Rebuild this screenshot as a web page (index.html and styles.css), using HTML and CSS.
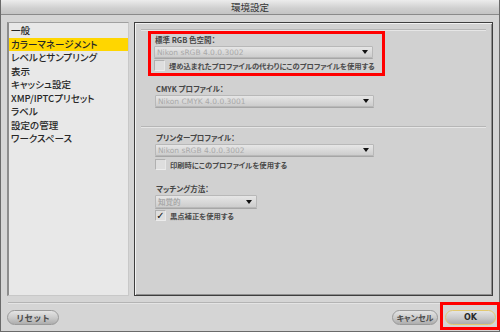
FILE: index.html
```html
<!DOCTYPE html>
<html lang="ja">
<head>
<meta charset="utf-8">
<link rel="stylesheet" href="styles.css">
</head>
<body>
<div class="window">
  <div class="titlebar">環境設定</div>
  <div class="main">
    <ul class="sidebar">
      <li>一般</li>
      <li class="selected">カラーマネージメント</li>
      <li>レベルとサンプリング</li>
      <li>表示</li>
      <li>キャッシュ設定</li>
      <li>XMP/IPTCプリセット</li>
      <li>ラベル</li>
      <li>設定の管理</li>
      <li>ワークスペース</li>
    </ul>
    <div class="content">
      <div class="rule"></div>
      <div class="group marked">
        <div class="label">標準 RGB 色空間：</div>
        <div class="select wide"><span>Nikon sRGB 4.0.0.3002</span><i class="arrow"></i></div>
        <div class="check"><span class="box"></span><span>埋め込まれたプロファイルの代わりにこのプロファイルを使用する</span></div>
      </div>
      <div class="group g2">
        <div class="label">CMYK プロファイル：</div>
        <div class="select wide"><span>Nikon CMYK 4.0.0.3001</span><i class="arrow"></i></div>
      </div>
      <div class="rule r2"></div>
      <div class="group g3">
        <div class="label">プリンタープロファイル：</div>
        <div class="select wide"><span>Nikon sRGB 4.0.0.3002</span><i class="arrow"></i></div>
        <div class="check"><span class="box"></span><span>印刷時にこのプロファイルを使用する</span></div>
      </div>
      <div class="group g4">
        <div class="label">マッチング方法：</div>
        <div class="select narrow"><span>知覚的</span><i class="arrow"></i></div>
        <div class="check"><span class="box checked">✓</span><span>黒点補正を使用する</span></div>
      </div>
    </div>
  </div>
  <div class="separator"></div>
  <div class="footer">
    <button class="btn reset">リセット</button>
    <div class="right">
      <button class="btn cancel">キャンセル</button>
      <button class="btn ok">OK</button>
    </div>
  </div>
</div>
</body>
</html>
```

FILE: styles.css
```css
* { box-sizing: border-box; }
html, body { margin: 0; padding: 0; }
body {
  width: 500px;
  height: 332px;
  overflow: hidden;
  font-family: "Noto Sans CJK JP", "Noto Sans", sans-serif;
  font-feature-settings: "palt";
  background: #d4d4d4;
}
.window {
  width: 500px;
  height: 332px;
  border: 1px solid #6a6a6a;
  border-top: none;
  background: #d5d5d5;
  display: flex;
  flex-direction: column;
}
.titlebar {
  height: 15px;
  background: linear-gradient(#ececec, #cfcfcf 60%, #c4c4c4);
  border-bottom: 1px solid #8a8a8a;
  text-align: center;
  font-size: 9.5px;
  line-height: 14px;
  color: #333;
  font-weight: 400;
  font-feature-settings: normal;
}
.main {
  display: flex;
  gap: 5px;
  padding: 7px 6px 0 6px;
  height: 281px;
}
.sidebar {
  list-style: none;
  margin: 0;
  padding: 1px 0 0 0;
  width: 122px;
  height: 274px;
  background: #e8e8e8;
  border-left: 2px solid #8c8c8c;
  border-top: 1px solid #a0a0a0;
  border-right: 1px solid #c8c8c8;
  border-bottom: 1px solid #c8c8c8;
}
.sidebar li {
  height: 13.5px;
  line-height: 13.5px;
  font-size: 9.5px;
  font-weight: 500;
  color: #262626;
  padding-left: 2px;
  white-space: nowrap;
}
.sidebar li.selected {
  background: #ffd600;
}
.content {
  flex: 1;
  height: 274px;
  background: #d1d1d1;
  border: 1px solid #3e3e3e;
  box-shadow: inset 1px 1px 0 #f2f2f2, inset -1px -1px 0 #8f8f8f;
  padding: 6px 6px 0 6px;
}
.rule {
  height: 2px;
  border-top: 1px solid #b6b6b6;
  border-bottom: 1px solid #e6e6e6;
}
.r2 { margin-top: 19px; }
.group {
  padding-left: 14px;
  width: 240px;
}
.group.marked {
  margin-left: 7px;
  width: 237px;
  border: 3px solid #ff0000;
  padding: 0 0 2px 3px;
}
.g2 { margin-top: 7px; }
.g3 { margin-top: 4px; }
.g4 { margin-top: 13px; }
.label {
  font-size: 7.5px;
  font-weight: 700;
  line-height: 11px;
  height: 11px;
  color: #454545;
  padding-left: 1px;
}
.select {
  margin-top: 1px;
  height: 12px;
  border: 1px solid #b8b8b8;
  border-radius: 1px;
  background: linear-gradient(#e6e6e6, #d7d7d7 60%, #cdcdcd);
  box-shadow: 0 1px 0 #a6a6a6;
  display: flex;
  align-items: center;
  justify-content: space-between;
  padding: 0 4px 0 2px;
  font-size: 7.5px;
  font-family: "DejaVu Sans", sans-serif;
  color: #a9a9a9;
}
.select.wide { width: 219px; }
.select.narrow { width: 102px; height: 13px; font-family: "Noto Sans CJK JP", sans-serif; font-weight: 700; }
.arrow {
  width: 0;
  height: 0;
  border-left: 3px solid transparent;
  border-right: 3px solid transparent;
  border-top: 4px solid #111;
}
.check {
  margin-top: 2px;
  display: flex;
  align-items: center;
  gap: 4px;
  font-size: 7.3px;
  font-weight: 700;
  color: #4a4a4a;
  height: 11px;
}
.box {
  width: 11px;
  height: 11px;
  background: #dedede;
  border: 1px solid #b0b0b0;
  border-right-color: #e8e8e8;
  border-bottom-color: #ececec;
  font-size: 10px;
  line-height: 10px;
  text-align: center;
  color: #111;
  font-family: "DejaVu Sans", sans-serif;
}
.g3 .check { margin-top: 3px; }
.separator {
  margin: 6px 7px 0 7px;
  height: 2px;
  border-top: 1px solid #b4b4b4;
  border-bottom: 1px solid #e4e4e4;
}
.footer {
  display: flex;
  justify-content: space-between;
  align-items: flex-start;
  padding: 6px 3px 0 6px;
}
.right {
  display: flex;
  gap: 7px;
}
.btn {
  height: 15px;
  border-radius: 8px;
  border: 1px solid #9a9a9a;
  background: linear-gradient(#e4e4e4, #c9c9c9 55%, #adadad);
  font-family: "Noto Sans CJK JP", sans-serif;
  font-feature-settings: normal;
  font-size: 8.5px;
  font-weight: 700;
  color: #4a4a4a;
  padding: 0;
  line-height: 13px;
}
.reset { width: 52px; }
.cancel { width: 46px; font-size: 8px; font-feature-settings: "palt"; }
.ok {
  width: 51px;
  position: relative;
  border-color: #e3c86f;
  color: #2a2a2a;
  font-family: "DejaVu Sans", sans-serif;
  font-size: 8px;
}
.ok::after {
  content: "";
  position: absolute;
  left: -6px;
  right: -5px;
  top: -9px;
  bottom: -6px;
  border: 3px solid #ff0000;
}
```
